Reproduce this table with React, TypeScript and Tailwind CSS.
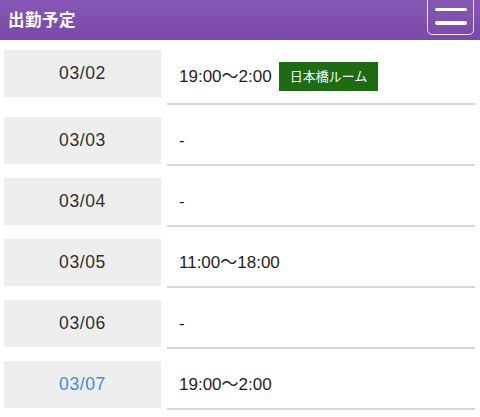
import React from "react";

interface ShiftRow {
  date: string;
  time: string;
  room?: string;
  today?: boolean;
}

const rows: ShiftRow[] = [
  { date: "03/02", time: "19:00〜2:00", room: "日本橋ルーム" },
  { date: "03/03", time: "-" },
  { date: "03/04", time: "-" },
  { date: "03/05", time: "11:00〜18:00" },
  { date: "03/06", time: "-" },
  { date: "03/07", time: "19:00〜2:00", today: true },
];

const font = {
  fontFamily: '"Liberation Sans", "Noto Sans CJK JP", sans-serif',
};

const App: React.FC = () => {
  return (
    <div className="w-[480px] h-[417px] overflow-hidden bg-white" style={font}>
      <header className="relative h-10 bg-gradient-to-b from-[#8757b6] to-[#7b4aa9] flex items-center px-2">
        <h1 className="text-[16.5px] font-semibold text-white tracking-[0.5px]">出勤予定</h1>
        <button className="absolute right-[6px] top-[-16px] w-[47px] h-[51px] rounded-[5px] border-[1.5px] border-[#ece2f4] flex flex-col items-center justify-center gap-[10px]">
          <span className="block w-8 h-[3.5px] rounded-full bg-white" />
          <span className="block w-8 h-[3.5px] rounded-full bg-white" />
          <span className="block w-8 h-[3.5px] rounded-full bg-white" />
        </button>
      </header>

      <div className="mt-[10px] pl-1 pr-[5px] flex flex-col gap-3">
        {rows.map((row) => (
          <div key={row.date} className="flex items-start gap-[6px]">
            <div
              className={`w-[157px] h-[47px] shrink-0 bg-[#eeeeee] flex items-center justify-center text-[17.5px] tracking-[0.6px] ${
                row.today ? "text-[#3a8de0]" : "text-[#2e2e2e]"
              }`}
            >
              {row.date}
            </div>
            <div className="flex-1 border-b-2 border-[#d8d8d8] flex items-center pl-3 py-3 text-[17px] leading-[23px] text-[#1e1e1e]">
              <span>{row.time}</span>
              {row.room && (
                <span className="ml-[7px] h-[29px] px-[11px] bg-[#1d6b12] text-white text-[13px] flex items-center">
                  {row.room}
                </span>
              )}
            </div>
          </div>
        ))}
      </div>
    </div>
  );
};

export default App;
